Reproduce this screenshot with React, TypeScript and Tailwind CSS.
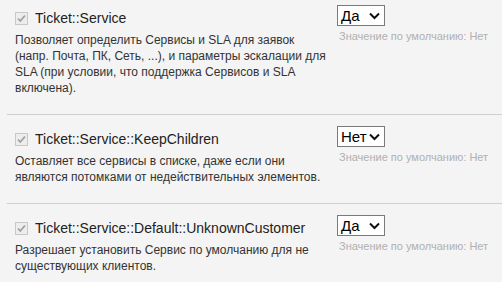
import React from 'react';

type Setting = {
    name: string;
    description: string;
    value: string;
};

const settings: Setting[] = [
    {
        name: 'Ticket::Service',
        description:
            'Позволяет определить Сервисы и SLA для заявок (напр. Почта, ПК, Сеть, ...), и параметры эскалации для SLA (при условии, что поддержка Сервисов и SLA включена).',
        value: 'Да',
    },
    {
        name: 'Ticket::Service::KeepChildren',
        description: 'Оставляет все сервисы в списке, даже если они являются потомками от недействительных элементов.',
        value: 'Нет',
    },
    {
        name: 'Ticket::Service::Default::UnknownCustomer',
        description: 'Разрешает установить Сервис по умолчанию для не существующих клиентов.',
        value: 'Да',
    },
];

function DisabledCheckbox() {
    return (
        <svg width="13" height="13" viewBox="0 0 13 13" className="shrink-0">
            <rect x="0.5" y="0.5" width="12" height="12" fill="#ededed" stroke="#c8c8c8" />
            <path d="M3 6.5 L5.3 9 L10 3.5" fill="none" stroke="#a0a0a0" strokeWidth="1.8" />
        </svg>
    );
}

function FakeSelect({ value }: { value: string }) {
    return (
        <div className="flex h-[21px] w-[48px] items-center justify-between border border-[#7a7a7a] bg-white pl-[3px] pr-[4px] text-[15px] leading-none text-black">
            <span>{value}</span>
            <svg width="11" height="8" viewBox="0 0 11 8">
                <path d="M1 1.5 L5.5 6 L10 1.5" fill="none" stroke="#111" strokeWidth="2" />
            </svg>
        </div>
    );
}

function SettingRow({ setting }: { setting: Setting }) {
    return (
        <div className="flex pl-[15px]">
            <div className="w-[322px] shrink-0 pr-[8px]">
                <div className="flex items-center gap-[7px] pt-[10px]">
                    <DisabledCheckbox />
                    <span className="text-[14px] leading-[16px] text-[#222]">{setting.name}</span>
                </div>
                <p className="mt-[6px] text-[12px] leading-[16px] text-[#333]">{setting.description}</p>
            </div>
            <div className="pt-[5px]">
                <FakeSelect value={setting.value} />
                <div className="mt-[4px] pl-[2px] text-[11px] leading-[13px] text-[#b0b0b0]">
                    Значение по умолчанию: Нет
                </div>
            </div>
        </div>
    );
}

export default function App() {
    return (
        <div className="h-[282px] w-[502px] overflow-hidden bg-[#f4f4f4] font-['Liberation_Sans',Arial,sans-serif]">
            <SettingRow setting={settings[0]} />
            <div className="ml-[7px] mt-[18px] border-t border-[#cfcfcf]" />
            <div className="pt-[6px]">
                <SettingRow setting={settings[1]} />
            </div>
            <div className="ml-[7px] mt-[18px] border-t border-[#cfcfcf]" />
            <div className="pt-[6px]">
                <SettingRow setting={settings[2]} />
            </div>
        </div>
    );
}
